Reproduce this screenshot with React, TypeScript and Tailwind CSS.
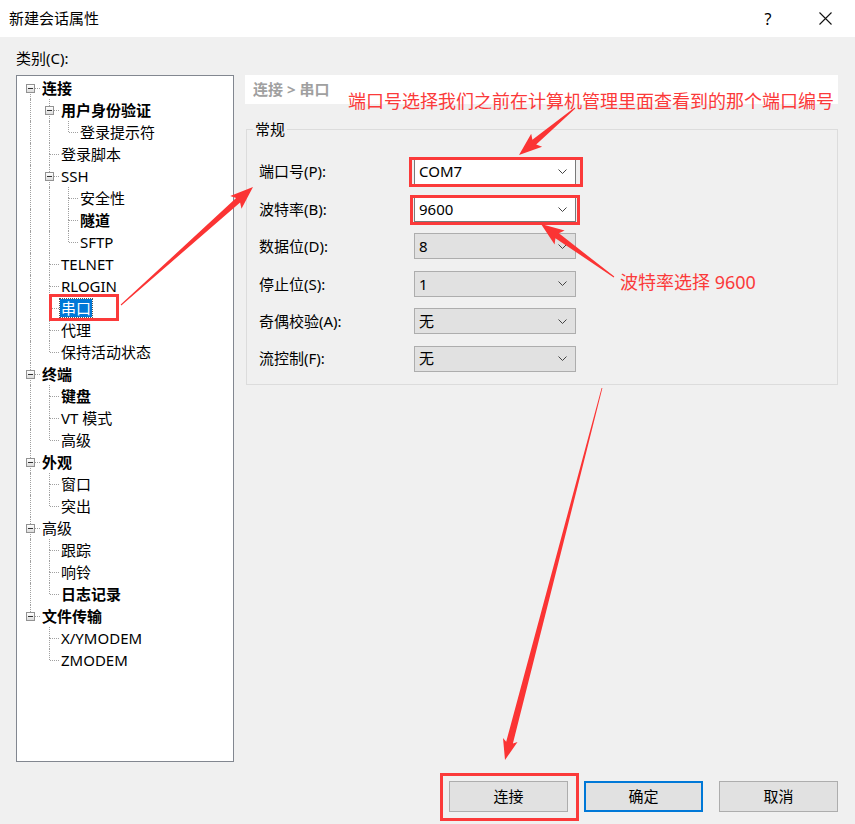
import React from 'react';

type Node = {label: string; level: number; bold?: boolean; open?: boolean; selected?: boolean};

const tree: Node[] = [
  {label: '连接', level: 0, bold: true, open: true},
  {label: '用户身份验证', level: 1, bold: true, open: true},
  {label: '登录提示符', level: 2},
  {label: '登录脚本', level: 1},
  {label: 'SSH', level: 1, open: true},
  {label: '安全性', level: 2},
  {label: '隧道', level: 2, bold: true},
  {label: 'SFTP', level: 2},
  {label: 'TELNET', level: 1},
  {label: 'RLOGIN', level: 1},
  {label: '串口', level: 1, selected: true},
  {label: '代理', level: 1},
  {label: '保持活动状态', level: 1},
  {label: '终端', level: 0, bold: true, open: true},
  {label: '键盘', level: 1, bold: true},
  {label: 'VT 模式', level: 1},
  {label: '高级', level: 1},
  {label: '外观', level: 0, bold: true, open: true},
  {label: '窗口', level: 1},
  {label: '突出', level: 1},
  {label: '高级', level: 0, open: true},
  {label: '跟踪', level: 1},
  {label: '响铃', level: 1},
  {label: '日志记录', level: 1, bold: true},
  {label: '文件传输', level: 0, bold: true, open: true},
  {label: 'X/YMODEM', level: 1},
  {label: 'ZMODEM', level: 1},
];

// is there a later sibling at the same level before the branch closes
const hasNext = (i: number) => {
  const lv = tree[i].level;
  for (let j = i + 1; j < tree.length; j++) {
    if (tree[j].level < lv) return false;
    if (tree[j].level === lv) return true;
  }
  return false;
};

const ancestorIndex = (i: number, lv: number) => {
  for (let j = i - 1; j >= 0; j--) if (tree[j].level === lv) return j;
  return -1;
};

function TreeRow({node, index}: {node: Node; index: number}) {
  const cells = [];
  for (let k = 0; k < node.level; k++) {
    const a = ancestorIndex(index, k);
    cells.push(
      <div key={k} className="relative w-[19px] h-[22px] shrink-0">
        {a >= 0 && hasNext(a) && (
          <div className="absolute left-[9px] top-0 bottom-0 border-l border-dotted border-[#a0a0a0]" />
        )}
      </div>,
    );
  }
  const first = index === 0;
  const next = hasNext(index);
  return (
    <div className="flex items-center h-[22px]">
      {cells}
      <div className="relative w-[19px] h-[22px] shrink-0">
        {!first && <div className="absolute left-[9px] top-0 h-[11px] border-l border-dotted border-[#a0a0a0]" />}
        {next && <div className="absolute left-[9px] top-[11px] bottom-0 border-l border-dotted border-[#a0a0a0]" />}
        <div className="absolute left-[10px] top-[11px] w-[9px] border-t border-dotted border-[#a0a0a0]" />
        {node.open && (
          <div className="absolute left-[5px] top-[7px] w-[9px] h-[9px] border border-[#929292] bg-gradient-to-b from-white to-[#dcdcdc] flex items-center justify-center">
            <div className="w-[5px] h-[1px] bg-[#333]" />
          </div>
        )}
      </div>
      <span
        className={
          'ml-[1px] px-[1px] leading-[18px] whitespace-nowrap ' +
          (node.bold ? 'font-bold ' : '') +
          (node.selected ? 'bg-[#0078d7] text-white outline outline-1 outline-dotted outline-[#555]' : 'text-black')
        }
      >
        {node.label}
      </span>
    </div>
  );
}

function Chevron() {
  return (
    <svg width="9" height="5" viewBox="0 0 9 5" className="shrink-0">
      <polyline points="0.5,0.5 4.5,4.5 8.5,0.5" fill="none" stroke="#444" strokeWidth="1" />
    </svg>
  );
}

function Combo({value, editable}: {value: string; editable?: boolean}) {
  return (
    <div
      className={
        'w-[162px] h-[26px] flex items-center justify-between pl-[4px] pr-[8px] border ' +
        (editable ? 'bg-white border-[#7a7a7a]' : 'bg-[#e1e1e1] border-[#adadad]')
      }
    >
      <span className="text-[15px] text-black">{value}</span>
      <Chevron />
    </div>
  );
}

const fields = [
  {label: '端口号(P):', value: 'COM7', editable: true},
  {label: '波特率(B):', value: '9600', editable: true},
  {label: '数据位(D):', value: '8'},
  {label: '停止位(S):', value: '1'},
  {label: '奇偶校验(A):', value: '无'},
  {label: '流控制(F):', value: '无'},
];

function arrow(x1: number, y1: number, x2: number, y2: number, w0: number, w1: number, hl: number, hw: number) {
  const dx = x2 - x1;
  const dy = y2 - y1;
  const len = Math.hypot(dx, dy);
  const ux = dx / len;
  const uy = dy / len;
  const nx = -uy;
  const ny = ux;
  const bx = x2 - ux * hl;
  const by = y2 - uy * hl;
  const bbx = x2 - ux * hl * 1.15;
  const bby = y2 - uy * hl * 1.15;
  const p = (x: number, y: number) => `${x.toFixed(1)},${y.toFixed(1)}`;
  return [
    p(x1 + (nx * w0) / 2, y1 + (ny * w0) / 2),
    p(bx + (nx * w1) / 2, by + (ny * w1) / 2),
    p(bbx + (nx * hw) / 2, bby + (ny * hw) / 2),
    p(x2, y2),
    p(bbx - (nx * hw) / 2, bby - (ny * hw) / 2),
    p(bx - (nx * w1) / 2, by - (ny * w1) / 2),
    p(x1 - (nx * w0) / 2, y1 - (ny * w0) / 2),
  ].join(' ');
}

function Button({children, primary}: {children: React.ReactNode; primary?: boolean}) {
  return (
    <button
      className={
        'w-[119px] h-[31px] bg-[#e1e1e1] text-[15px] text-black flex items-center justify-center ' +
        (primary ? 'border-2 border-[#0078d7]' : 'border border-[#adadad]')
      }
    >
      {children}
    </button>
  );
}

export default function App() {
  return (
    <div
      className="relative w-[855px] h-[824px] bg-[#f0f0f0] overflow-hidden text-[15px] text-black"
      style={{fontFamily: '"Noto Sans", "Noto Sans CJK SC", sans-serif'}}
    >
      {/* title bar */}
      <div className="h-[37px] bg-white flex items-center">
        <span className="ml-[9px] text-[15px]">新建会话属性</span>
        <div className="ml-auto flex items-center h-full">
          <div className="w-[44px] h-full flex items-center justify-center text-[16px]">?</div>
          <div className="w-[46px] h-full flex items-center justify-center ml-[12px] mr-[7px]">
            <svg width="13" height="13" viewBox="0 0 13 13">
              <path d="M0.5 0.5 L12.5 12.5 M12.5 0.5 L0.5 12.5" stroke="#111" strokeWidth="1.1" />
            </svg>
          </div>
        </div>
      </div>

      {/* body */}
      <div className="flex pl-[16px] h-[725px]">
        <div className="w-[218px] flex flex-col">
          <div className="h-[38px] pt-[11px] leading-[20px]">类别(C):</div>
          <div className="h-[687px] border border-[#828790] bg-white pt-[1px] pl-[4px]">
            {tree.map((n, i) => (
              <TreeRow key={i} node={n} index={i} />
            ))}
          </div>
        </div>

        <div className="w-[593px] ml-[11px] pt-[38px]">
          <div className="h-[29px] bg-white flex items-center pl-[8px] font-bold text-[#a0a0a0]">连接 &gt; 串口</div>
          <fieldset className="mt-[15px] ml-[1px] border border-[#dcdcdc]">
            <legend className="ml-[6px] px-[2px] leading-[20px]">常规</legend>
            <div className="pl-[12px] pt-[14px] pb-[7px]">
              {fields.map(f => (
                <div key={f.label} className="h-[37.4px] flex items-center">
                  <span className="w-[155px]">{f.label}</span>
                  <Combo value={f.value} editable={f.editable} />
                </div>
              ))}
            </div>
          </fieldset>
        </div>
      </div>

      {/* buttons */}
      <div className="mt-[19px] flex justify-end pr-[17px] gap-[16px]">
        <Button>连接</Button>
        <Button primary>确定</Button>
        <Button>取消</Button>
      </div>

      {/* annotations */}
      <div className="absolute left-[49px] top-[294px] w-[70px] h-[27px] border-[3px] border-[#fb3a3a]" />
      <div className="absolute left-[409px] top-[157px] w-[174px] h-[30px] border-[3px] border-[#fb3a3a]" />
      <div className="absolute left-[410px] top-[195px] w-[170px] h-[30px] border-[3px] border-[#fb3a3a]" />
      <div className="absolute left-[440px] top-[773px] w-[139px] h-[48px] border-[3px] border-[#fb3a3a]" />

      <div className="absolute left-[348px] top-[89px] text-[18px] leading-[24px] text-[#fb3a3a] whitespace-nowrap">
        端口号选择我们之前在计算机管理里面查看到的那个端口编号
      </div>
      <div className="absolute left-[620px] top-[270px] text-[18px] leading-[24px] text-[#fb3a3a] whitespace-nowrap">
        波特率选择 9600
      </div>

      <svg className="absolute inset-0 pointer-events-none" width="855" height="824" viewBox="0 0 855 824">
        <g fill="#fb3434">
          <polygon points={arrow(575, 108, 519, 155, 1, 6, 20, 17)} />
          <polygon points={arrow(614, 277, 541, 224, 1, 6, 20, 17)} />
          <polygon points={arrow(121, 305, 253, 187, 1, 6, 20, 17)} />
          <polygon points={arrow(602, 388, 505, 760, 0.8, 7, 18, 15)} />
        </g>
      </svg>
    </div>
  );
}
